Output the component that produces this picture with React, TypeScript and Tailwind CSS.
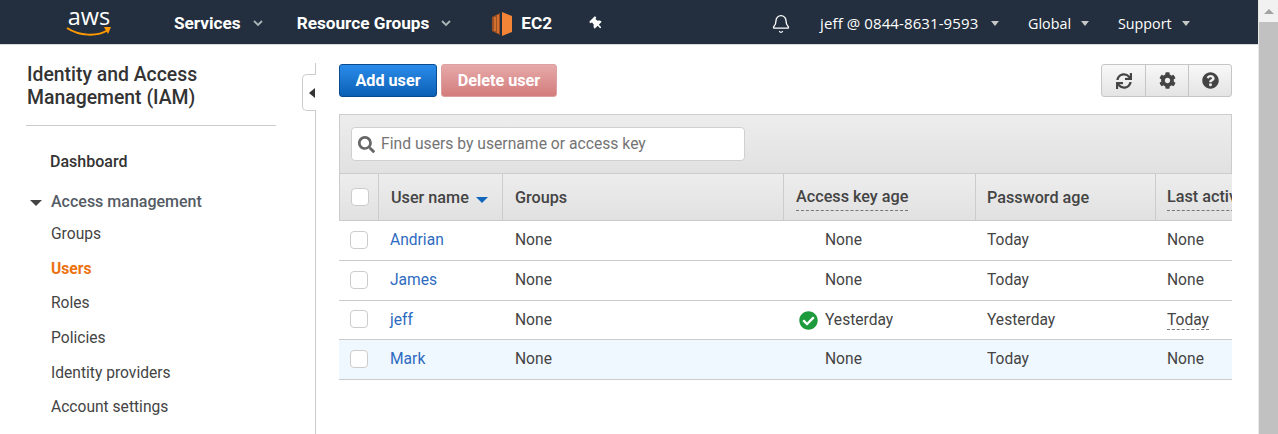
import { Bell } from "lucide-react";
import { FaCheckCircle, FaCog, FaQuestionCircle, FaSearch, FaSync, FaThumbtack } from "react-icons/fa";

const users = [
  { name: "Andrian", keyAge: "None", passwordAge: "Today", last: "None", height: "h-10" },
  { name: "James", keyAge: "None", passwordAge: "Today", last: "None", height: "h-10" },
  { name: "jeff", keyAge: "Yesterday", passwordAge: "Yesterday", last: "Today", height: "h-[39px]", ok: true },
  { name: "Mark", keyAge: "None", passwordAge: "Today", last: "None", height: "h-10", selected: true },
];

const navLinks = ["Groups", "Users", "Roles", "Policies", "Identity providers", "Account settings"];

function Caret({ className }: { className: string }) {
  return <span className={`h-0 w-0 border-x-[4px] border-t-[5px] border-x-transparent ${className}`} />;
}

function Chevron() {
  return (
    <svg width="10" height="7" viewBox="0 0 10 7" className="text-[#aab7b8]">
      <path d="M1 1l4 4 4-4" fill="none" stroke="currentColor" strokeWidth="1.8" />
    </svg>
  );
}

function Checkbox() {
  return <span className="block size-[18px] rounded-[4px] border border-[#ccc] bg-white" />;
}

function Header() {
  return (
    <header className="flex h-[45px] shrink-0 items-center border-b border-[#d5dbdb] bg-[#232f3e] pt-[3px] text-white">
      <div className="mb-[10px] ml-[66px] flex w-[46px] flex-col items-center">
        <span className="text-[23.5px] leading-[32px] font-normal font-['Open_Sans',sans-serif]">aws</span>
        <svg width="46" height="10" viewBox="0 0 46 10" className="-mt-[5px]">
          <path d="M1 1c12 8 30 9 41 2" fill="none" stroke="#f90" strokeWidth="2" />
          <path d="M38 0l7 0-3 7z" fill="#f90" />
        </svg>
      </div>
      <span className="ml-[62px] text-[17.2px] font-bold">Services</span>
      <span className="ml-3 flex"><Chevron /></span>
      <span className="ml-[34px] text-[17.2px] font-bold">Resource Groups</span>
      <span className="ml-3 flex"><Chevron /></span>
      <svg width="20" height="24" viewBox="0 0 20 24" className="ml-[41px]">
        <path d="M0 5l8-4v22l-8-4z" fill="#9d5025" />
        <path d="M10 0l10 4v16l-10 4z" fill="#f58536" />
        <path d="M3 5v14M6 3v18" stroke="#f58536" strokeWidth="1.2" />
      </svg>
      <span className="ml-[9px] text-[17.2px] font-bold">EC2</span>
      <FaThumbtack className="ml-[38px] -rotate-45 text-[13px]" />
      <Bell className="ml-[168px] size-[20px]" strokeWidth={1.6} />
      <div className="ml-[29px] flex items-center gap-[11px] font-['Open_Sans',sans-serif]">
        <span className="w-[160px] text-[15px] tracking-[0.1px] whitespace-nowrap">jeff @ 0844-8631-9593</span>
        <Caret className="border-t-[#c7c7c7]" />
      </div>
      <div className="ml-[29px] flex items-center gap-[10px] text-[14.3px] font-['Open_Sans',sans-serif]">
        <span>Global</span>
        <Caret className="border-t-[#c7c7c7]" />
      </div>
      <div className="ml-[29px] flex items-center gap-[10px] text-[14.3px] font-['Open_Sans',sans-serif]">
        <span>Support</span>
        <Caret className="border-t-[#c7c7c7]" />
      </div>
    </header>
  );
}

function Sidebar() {
  return (
    <aside className="relative w-[316px] shrink-0 pt-[18px]">
      <div className="absolute top-[18px] right-0 bottom-0 w-px bg-[#ccc]" />
      <div className="absolute top-[29px] right-0 flex h-[37px] w-[14px] items-center justify-end rounded-l-[5px] border border-r-0 border-[#ccc] bg-white pr-[1px]">
        <span className="h-0 w-0 border-y-[5px] border-r-[6px] border-y-transparent border-r-[#333]" />
      </div>
      <div className="ml-[26px] w-[250px] border-b border-[#ccc] pb-4">
        <h1 className="pl-px text-[19.4px] leading-[23px] font-medium text-[#333]">
          Identity and Access
          <br />
          Management (IAM)
        </h1>
      </div>
      <div className="mt-[26px] ml-[50px] text-[16px] leading-5 font-medium text-[#333]">Dashboard</div>
      <div className="relative mt-5 ml-[51px] text-[16px] leading-5 font-medium text-[#545b64]">
        <Caret className="absolute top-[8px] -left-[21px] border-x-[6px] border-t-[6px] border-t-[#444]" />
        Access management
      </div>
      <ul className="mt-[12px] ml-[51px] flex flex-col gap-[14.7px] text-[15.6px] leading-5 text-[#444]">
        {navLinks.map((link) => (
          <li key={link} className={link === "Users" ? "font-bold text-[#ec7211]" : ""}>
            {link}
          </li>
        ))}
      </ul>
    </aside>
  );
}

function UsersTable() {
  return (
    <div className="mt-[17px] w-[893px] overflow-hidden">
      <div className="h-[59px] border-x border-t border-[#ccc] bg-gradient-to-b from-[#ededed] to-[#e1e1e1] px-[11px] pt-[12px]">
        <div className="flex h-[34px] w-[394px] items-center gap-[6px] rounded-[4px] border border-[#d0d0d0] bg-white pl-[6px] text-[15.7px] text-[#747474]">
          <FaSearch className="text-[17px] text-[#666]" />
          Find users by username or access key
        </div>
      </div>
      <div className="flex h-[48px] border-y border-[#ccc] bg-gradient-to-b from-[#ededed] to-[#e1e1e1] text-[16.2px] font-medium text-[#444]">
        <div className="flex w-[40px] shrink-0 items-center border-x border-[#ccc] pl-[11px]"><Checkbox /></div>
        <div className="flex w-[124px] shrink-0 items-center gap-[7px] border-r border-[#ccc] pt-[2px] pl-3">
          User name
          <span className="mt-1 h-0 w-0 border-x-[6px] border-t-[6px] border-x-transparent border-t-[#1166bb]" />
        </div>
        <div className="flex w-[281px] shrink-0 items-center border-r border-[#ccc] pt-[2px] pl-3">Groups</div>
        <div className="flex w-[192px] shrink-0 items-center border-r border-[#ccc] pt-[2px] pl-3">
          <span className="border-b border-dashed border-[#777]">Access key age</span>
        </div>
        <div className="flex w-[180px] shrink-0 items-center border-r border-[#ccc] pt-[2px] pl-[11px]">Password age</div>
        <div className="flex flex-1 items-center overflow-hidden pt-[2px] pl-[11px] whitespace-nowrap">
          <span className="border-b border-dashed border-[#777]">Last activity</span>
        </div>
      </div>
      {users.map((user) => (
        <div
          key={user.name}
          className={`flex items-center border-b border-[#ccc] pt-px text-[15.6px] text-[#444] ${user.height} ${user.selected ? "bg-[#f0f8ff]" : "bg-white"}`}
        >
          <div className="mb-[3px] w-[40px] shrink-0 pl-[11px]"><Checkbox /></div>
          <div className="w-[124px] shrink-0 pl-[11px] text-[#2e6bc0]">{user.name}</div>
          <div className="w-[281px] shrink-0 pl-3">None</div>
          <div className="relative w-[192px] shrink-0 pl-[41px]">
            {user.ok && <FaCheckCircle className="absolute top-[2px] left-[15px] text-[19px] text-[#1d9a3c]" />}
            {user.keyAge}
          </div>
          <div className="w-[180px] shrink-0 pl-[11px]">{user.passwordAge}</div>
          <div className="flex-1 pl-[11px]">
            <span className={user.ok ? "border-b border-dashed border-[#777]" : ""}>{user.last}</span>
          </div>
        </div>
      ))}
    </div>
  );
}

function Main() {
  return (
    <main className="ml-[23px] flex w-[893px] flex-col pt-[19px]">
      <div className="flex items-start justify-between">
        <div className="flex gap-1 text-[16.2px] font-bold text-white">
          <button className="h-[33px] w-[98px] rounded-[3px] border border-[#0a4a8f] bg-gradient-to-b from-[#2a8ceb] to-[#0b60b5] pt-[2px]">Add user</button>
          <button className="h-[33px] w-[116px] rounded-[3px] border border-[#dca0a0] bg-gradient-to-b from-[#e6a9a9] to-[#d37c7c] pt-[2px]">Delete user</button>
        </div>
        <div className="flex h-[33px] w-[131px] rounded-[3px] border border-[#c6c6c6] bg-gradient-to-b from-[#f8f8f8] to-[#e4e4e4] text-[#444]">
          <div className="flex w-[44px] items-center justify-center border-r border-[#c6c6c6]"><FaSync className="text-[16px]" /></div>
          <div className="flex w-[43px] items-center justify-center border-r border-[#c6c6c6]"><FaCog className="text-[17px]" /></div>
          <div className="flex flex-1 items-center justify-center"><FaQuestionCircle className="text-[17px]" /></div>
        </div>
      </div>
      <UsersTable />
    </main>
  );
}

export default function App() {
  return (
    <div className="flex h-[434px] w-[1278px] overflow-hidden bg-white font-['Roboto',sans-serif]">
      <div className="flex w-[1258px] flex-col">
        <Header />
        <div className="flex flex-1">
          <Sidebar />
          <Main />
        </div>
      </div>
      <div className="flex w-5 flex-col items-center border-l border-[#e8e8e8] bg-[#f1f1f1]">
        <span className="mt-[9px] h-0 w-0 border-x-[5px] border-b-[5px] border-x-transparent border-b-[#a3a3a3]" />
        <div className="mt-[8px] w-full flex-1 bg-[#c1c1c1]" />
      </div>
    </div>
  );
}
